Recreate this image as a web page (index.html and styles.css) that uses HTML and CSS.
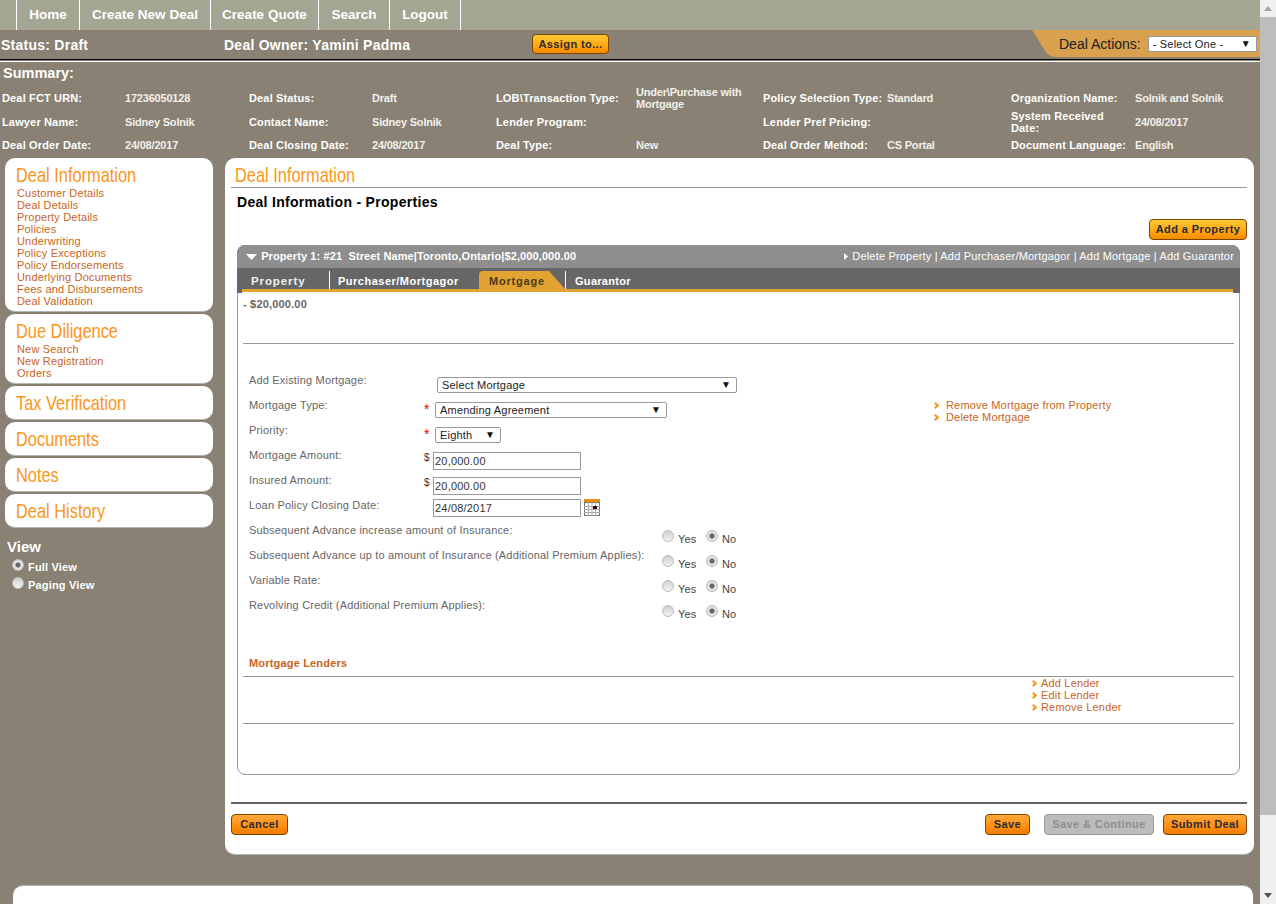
FILE: index.html
```html
<!DOCTYPE html>
<html lang="en">
<head>
  <meta charset="UTF-8">
  <meta name="viewport" content="width=device-width, initial-scale=1.0">
  <title>Deal Information</title>
  <link rel="stylesheet" href="styles.css">
</head>
<body>
  <div class="page">
    <!-- Top navigation -->
    <nav class="top-nav">
      <a href="#" class="nav-home">Home</a>
      <a href="#" class="nav-new">Create New Deal</a>
      <a href="#" class="nav-quote">Create Quote</a>
      <a href="#" class="nav-search">Search</a>
      <a href="#" class="nav-logout">Logout</a>
    </nav>

    <!-- Status bar -->
    <div class="status-bar">
      <div class="status-text">Status: Draft</div>
      <div class="owner-text">Deal Owner: Yamini Padma</div>
      <button class="btn btn-assign" type="button">Assign to...</button>
      <div class="deal-actions">
        <label for="dealActions">Deal Actions:</label>
        <span class="select-wrap">
          <select id="dealActions" class="select select-actions"><option>- Select One -</option></select>
        </span>
      </div>
    </div>
    <div class="status-rule"></div>

    <!-- Summary -->
    <section class="summary">
      <h2>Summary:</h2>
      <div class="summary-grid">
        <b>Deal FCT URN:</b><span>17236050128</span>
        <b>Deal Status:</b><span>Draft</span>
        <b>LOB\Transaction Type:</b><span>Under\Purchase with Mortgage</span>
        <b>Policy Selection Type:</b><span>Standard</span>
        <b>Organization Name:</b><span>Solnik and Solnik</span>

        <b>Lawyer Name:</b><span>Sidney Solnik</span>
        <b>Contact Name:</b><span>Sidney Solnik</span>
        <b>Lender Program:</b><span></span>
        <b>Lender Pref Pricing:</b><span></span>
        <b>System Received<br>Date:</b><span>24/08/2017</span>

        <b>Deal Order Date:</b><span>24/08/2017</span>
        <b>Deal Closing Date:</b><span>24/08/2017</span>
        <b>Deal Type:</b><span>New</span>
        <b>Deal Order Method:</b><span>CS Portal</span>
        <b>Document Language:</b><span>English</span>
      </div>
    </section>

    <div class="layout">
      <!-- Left side menu -->
      <aside class="sidebar">
        <div class="side-card">
          <h3><span class="narrow">Deal Information</span></h3>
          <a href="#">Customer Details</a>
          <a href="#">Deal Details</a>
          <a href="#">Property Details</a>
          <a href="#">Policies</a>
          <a href="#">Underwriting</a>
          <a href="#">Policy Exceptions</a>
          <a href="#">Policy Endorsements</a>
          <a href="#">Underlying Documents</a>
          <a href="#">Fees and Disbursements</a>
          <a href="#">Deal Validation</a>
        </div>
        <div class="side-card">
          <h3><span class="narrow">Due Diligence</span></h3>
          <a href="#">New Search</a>
          <a href="#">New Registration</a>
          <a href="#">Orders</a>
        </div>
        <div class="side-card"><h3><span class="narrow">Tax Verification</span></h3></div>
        <div class="side-card"><h3><span class="narrow">Documents</span></h3></div>
        <div class="side-card"><h3><span class="narrow">Notes</span></h3></div>
        <div class="side-card"><h3><span class="narrow">Deal History</span></h3></div>

        <div class="view-box">
          <h4>View</h4>
          <label><input type="radio" class="radio" name="view" checked> Full View</label>
          <label><input type="radio" class="radio" name="view"> Paging View</label>
        </div>
      </aside>

      <!-- Main content -->
      <main class="main-card">
        <h3 class="main-title"><span class="narrow">Deal Information</span></h3>
        <h1 class="page-title">Deal Information - Properties</h1>
        <div class="add-row"><button class="btn btn-add" type="button">Add a Property</button></div>

        <div class="property">
          <div class="property-head">
            <div class="property-name">
              <svg class="tri-down" width="11" height="6" viewBox="0 0 11 6"><path d="M0 0H11L5.500 6Z" fill="#fff"/></svg>
              Property 1: #21&nbsp; Street Name|Toronto,Ontario|$2,000,000.00
            </div>
            <div class="property-links">
              <svg class="tri-right" width="4" height="7" viewBox="0 0 4 7"><path d="M0 0L4 3.500L0 7Z" fill="#fff"/></svg>
              Delete Property | Add Purchaser/Mortgagor | Add Mortgage | Add Guarantor
            </div>
          </div>
          <div class="tabs">
            <a href="#" class="tab tab-property">Property</a>
            <a href="#" class="tab tab-purchaser">Purchaser/Mortgagor</a>
            <a href="#" class="tab tab-active">Mortgage</a>
            <a href="#" class="tab tab-guarantor">Guarantor</a>
          </div>

          <div class="property-body">
            <div class="mortgage-name">- $20,000.00</div>
            <hr class="rule rule-top">

            <div class="form-area">
              <div class="form-fields">
                <div class="form-row">
                  <label>Add Existing Mortgage:</label>
                  <span class="select-wrap select-existing">
                    <select class="select"><option>Select Mortgage</option></select>
                  </span>
                </div>
                <div class="form-row">
                  <label>Mortgage Type:</label>
                  <i class="req">*</i>
                  <span class="select-wrap select-type">
                    <select class="select"><option>Amending Agreement</option></select>
                  </span>
                </div>
                <div class="form-row">
                  <label>Priority:</label>
                  <i class="req">*</i>
                  <span class="select-wrap select-priority">
                    <select class="select"><option>Eighth</option></select>
                  </span>
                </div>
                <div class="form-row">
                  <label>Mortgage Amount:</label>
                  <i class="dollar">$</i>
                  <input class="text-input" type="text" value="20,000.00">
                </div>
                <div class="form-row">
                  <label>Insured Amount:</label>
                  <i class="dollar">$</i>
                  <input class="text-input" type="text" value="20,000.00">
                </div>
                <div class="form-row">
                  <label>Loan Policy Closing Date:</label>
                  <i class="dollar"></i>
                  <input class="text-input text-input-date" type="text" value="24/08/2017">
                  <svg class="calendar" width="16" height="17" viewBox="0 0 16 17">
                    <rect x="0" y="0" width="16" height="3" fill="#e8900c"/>
                    <rect x="0.500" y="3.500" width="15" height="13" fill="#fff" stroke="#777"/>
                    <path d="M0 7.500H16M0 10.500H16M0 13.500H16M4.500 3V17M8 3V17M11.500 3V17" stroke="#aaa" fill="none"/>
                    <rect x="9" y="7" width="4" height="3" fill="#300"/>
                  </svg>
                </div>
                <div class="form-row">
                  <label class="label-wide">Subsequent Advance increase amount of Insurance:</label>
                  <span class="yes-no">
                    <input type="radio" class="radio" name="r1"><em>Yes</em>
                    <input type="radio" class="radio" name="r1" checked><em>No</em>
                  </span>
                </div>
                <div class="form-row">
                  <label class="label-wide">Subsequent Advance up to amount of Insurance (Additional Premium Applies):</label>
                  <span class="yes-no">
                    <input type="radio" class="radio" name="r2"><em>Yes</em>
                    <input type="radio" class="radio" name="r2" checked><em>No</em>
                  </span>
                </div>
                <div class="form-row">
                  <label class="label-wide">Variable Rate:</label>
                  <span class="yes-no">
                    <input type="radio" class="radio" name="r3"><em>Yes</em>
                    <input type="radio" class="radio" name="r3" checked><em>No</em>
                  </span>
                </div>
                <div class="form-row">
                  <label class="label-wide">Revolving Credit (Additional Premium Applies):</label>
                  <span class="yes-no">
                    <input type="radio" class="radio" name="r4"><em>Yes</em>
                    <input type="radio" class="radio" name="r4" checked><em>No</em>
                  </span>
                </div>
              </div>
              <div class="form-links">
                <a href="#" class="chev-link">Remove Mortgage from Property</a>
                <a href="#" class="chev-link">Delete Mortgage</a>
              </div>
            </div>

            <h5 class="lenders-title">Mortgage Lenders</h5>
            <hr class="rule">
            <div class="lender-links">
              <a href="#" class="chev-link">Add Lender</a>
              <a href="#" class="chev-link">Edit Lender</a>
              <a href="#" class="chev-link">Remove Lender</a>
            </div>
            <hr class="rule">
          </div>
        </div>

        <div class="footer-buttons">
          <button class="btn btn-cancel" type="button">Cancel</button>
          <button class="btn btn-save" type="button">Save</button>
          <button class="btn btn-disabled" type="button">Save &amp; Continue</button>
          <button class="btn btn-submit" type="button">Submit Deal</button>
        </div>
      </main>
    </div>

    <div class="bottom-card"></div>
  </div>

  <!-- Window scrollbar -->
  <div class="scrollbar">
    <svg class="arrow-up" width="8" height="5" viewBox="0 0 8 5"><path d="M4 0L8 5H0Z" fill="#a3a3a3"/></svg>
    <div class="scroll-thumb"></div>
    <svg class="arrow-down" width="8" height="5" viewBox="0 0 8 5"><path d="M0 0H8L4 5Z" fill="#505050"/></svg>
  </div>
</body>
</html>
```

FILE: styles.css
```css
/* General Styles */
html, body {
  margin: 0;
  padding: 0;
  height: 904px;
  overflow: hidden;
}

body {
  display: flex;
  font-family: "Liberation Sans", Arial, sans-serif;
  font-size: 11px;
  letter-spacing: 0.18px;
  color: #666;
  background-color: #898173;
}

a {
  text-decoration: none;
}

.page {
  width: 1260px;
  height: 904px;
  overflow: hidden;
  flex: none;
}

/* Top Nav */
.top-nav {
  display: flex;
  height: 30px;
  padding-left: 16px;
  background-color: #a3a692;
}

.top-nav a {
  box-sizing: border-box;
  border-left: 1px solid #fff;
  color: #fff;
  font-size: 13.500px;
  font-weight: bold;
  letter-spacing: 0;
  line-height: 29px;
  text-align: center;
}

.nav-home { width: 63px; }
.nav-new { width: 131px; }
.nav-quote { width: 108px; }
.nav-search { width: 71px; }
.top-nav .nav-logout { width: 72px; border-right: 1px solid #fff; }

/* Status Bar */
.status-bar {
  display: flex;
  align-items: center;
  height: 29px;
  border-bottom: 1px solid #000;
  color: #fff;
  font-size: 14px;
  font-weight: bold;
  letter-spacing: 0.25px;
}

.status-text {
  width: 224px;
  padding-left: 1px;
  box-sizing: border-box;
}

.owner-text {
  width: 308px;
}

.status-rule {
  height: 1px;
  margin-top: 1px;
  background-color: #fff;
}

.deal-actions {
  display: flex;
  align-items: center;
  gap: 7px;
  box-sizing: border-box;
  width: 228px;
  height: 27px;
  margin-left: auto;
  margin-top: -2px;
  padding-left: 27px;
  color: #222;
  font-weight: normal;
  letter-spacing: 0;
  background-color: #d9a04d;
  clip-path: path('M0 0H228V27H24Q16 27 12 19Z');
}

.deal-actions label {
  font-size: 14px;
}

.deal-actions .select-wrap {
  width: 109px;
  margin-top: 0;
}

/* Buttons */
.btn {
  height: 21px;
  padding: 0 0 2px;
  border: 1px solid #7a4500;
  border-radius: 4px;
  background: linear-gradient(#ffa83a, #ff8f10 60%, #ef7a00);
  color: #2b2b3a;
  font-family: inherit;
  font-size: 11px;
  font-weight: bold;
  letter-spacing: 0.4px;
}

.btn-add,
.btn-assign {
  background: linear-gradient(#ffc832, #ffa60e 60%, #f88a00);
}

.btn-add {
  width: 98px;
}

.btn-assign {
  width: 77px;
  height: 20px;
  padding: 0;
  margin-top: -1px;
}

.btn-cancel {
  width: 57px;
}

.btn-save {
  width: 45px;
  margin-left: auto;
}

.btn-disabled {
  width: 110px;
  margin-left: 14px;
  border-color: #999;
  background: #bcbcbc;
  color: #8e8e8e;
}

.btn-submit {
  width: 84px;
  margin-left: 9px;
}

/* Summary */
.summary {
  height: 96px;
  color: #fff;
}

.summary h2 {
  margin: 0;
  padding: 3px 0 0 3px;
  font-size: 14.500px;
  letter-spacing: 0;
  line-height: 17px;
}

.summary-grid {
  display: grid;
  grid-template-columns: 123px 124px 123px 124px 140px 127px 124px 124px 124px 1fr;
  grid-template-rows: 24px 23px 24px;
  align-items: center;
  margin-top: 4px;
  padding-left: 2px;
  font-size: 11px;
  line-height: 12px;
  font-weight: bold;
}

.summary-grid span {
  color: #f2f0ea;
  letter-spacing: -0.2px;
}

.summary-grid b {
  letter-spacing: 0.15px;
  white-space: nowrap;
}

/* Layout */
.layout {
  display: flex;
  align-items: flex-start;
  padding-left: 5px;
}

.sidebar {
  width: 208px;
  flex: none;
}

.side-card {
  box-sizing: border-box;
  min-height: 34px;
  margin-bottom: 2px;
  padding: 5px 0 4px 11px;
  border-bottom: 1px solid #b4b4b4;
  border-radius: 10px;
  background-color: #fff;
}

.side-card h3,
.main-title {
  margin: 0;
  color: #fa9619;
  font-size: 21px;
  font-weight: normal;
  letter-spacing: 0;
  line-height: 24px;
}

/* no condensed family is installed, so the heading is squeezed */
.narrow {
  display: inline-block;
  transform: scaleX(0.78);
  transform-origin: left center;
  white-space: nowrap;
}

.side-card a {
  display: block;
  padding-left: 1px;
  color: #c9651b;
  font-size: 11px;
  line-height: 12px;
}

.view-box {
  padding: 9px 0 0 2px;
  color: #fff;
  font-weight: bold;
}

.view-box h4 {
  margin: 0 0 3px;
  font-size: 15px;
  letter-spacing: 0;
  line-height: 16px;
}

.view-box label {
  display: flex;
  align-items: center;
  gap: 4px;
  height: 18px;
  padding-left: 5px;
}

.view-box .radio {
  margin-top: -4px;
}

/* Radios */
.radio {
  appearance: none;
  width: 12px;
  height: 12px;
  margin: 0;
  border: 1px solid #bdbdbd;
  border-radius: 50%;
  background: linear-gradient(#cfcfcf, #f4f4f4);
  flex: none;
}

.radio:checked {
  background: radial-gradient(circle, #666 0 2px, #e0e0e0 3px);
}

/* Main Card */
.main-card {
  box-sizing: border-box;
  width: 1029px;
  height: 697px;
  margin-left: 12px;
  padding: 5px 7px 0 6px;
  border-bottom: 1px solid #b4b4b4;
  border-radius: 10px;
  background-color: #fff;
}

.main-title {
  padding-left: 4px;
  border-bottom: 1px solid #999;
}

.page-title {
  margin: 6px 0 0 6px;
  color: #000;
  font-size: 14px;
  letter-spacing: 0.3px;
  line-height: 16px;
}

.add-row {
  display: flex;
  justify-content: flex-end;
  margin-top: 9px;
}

/* Property Panel */
.property {
  box-sizing: border-box;
  height: 530px;
  margin: 5px 7px 0 6px;
  border: 1px solid #999;
  border-radius: 8px;
}

.property-head {
  display: flex;
  justify-content: space-between;
  height: 23px;
  margin: -1px -1px 0;
  padding: 0 6px 0 9px;
  border-radius: 8px 8px 0 0;
  background-color: #8e8e8e;
  color: #fff;
  line-height: 23px;
}

.property-name {
  font-weight: bold;
  letter-spacing: 0.1px;
}

.tri-down {
  margin-right: 1px;
}

.tri-right {
  margin-right: 1px;
}

.tabs {
  display: flex;
  box-sizing: border-box;
  height: 25px;
  margin: 0 -1px;
  padding-top: 3px;
  background: linear-gradient(#666 0 21px, #e2a333 21px 24px, #fff 24px);
  background-size: 991px 100%;
  background-position: 5px 0;
  background-repeat: no-repeat;
  background-color: #666;
  font-weight: bold;
  letter-spacing: 0.5px;
}

.tab {
  box-sizing: border-box;
  height: 18px;
  color: #fff;
  line-height: 20px;
}

.tab-property {
  width: 88px;
  margin-left: 5px;
  padding-left: 9px;
  border-right: 1px solid #fff;
  color: #eee;
  font-size: 11.500px;
  letter-spacing: 0.9px;
}

.tab-purchaser {
  width: 149px;
  padding-left: 8px;
}

.tab-active {
  width: 86px;
  padding-left: 10px;
  border-radius: 4px 0 0 0;
  background-color: #e2a333;
  color: #4a3a1a;
  letter-spacing: 0.8px;
  clip-path: polygon(0 0, 70px 0, 86px 18px, 0 18px);
}

.tab-guarantor {
  padding-left: 9px;
  border-left: 1px solid #fff;
  letter-spacing: 0.3px;
}

.property-body {
  padding: 0 5px;
}

.mortgage-name {
  margin-top: 5px;
  font-weight: bold;
  line-height: 12px;
}

.rule {
  height: 1px;
  margin: 0;
  border: 0;
  background-color: #999;
}

.rule-top {
  margin-top: 33px;
}

/* Mortgage Form */
.form-area {
  display: flex;
  margin-top: 25px;
}

.form-fields {
  width: 692px;
  flex: none;
}

.form-row {
  display: flex;
  align-items: flex-start;
  height: 25px;
  padding-left: 6px;
  line-height: 25px;
}

.form-row label {
  width: 175px;
  flex: none;
  margin-top: -1px;
}

.form-row .label-wide {
  width: 413px;
}

.req {
  width: 11px;
  margin-top: 3px;
  color: #e00;
  font-size: 14px;
  font-style: normal;
  line-height: 24px;
}

.dollar {
  width: 9px;
  margin-top: 3px;
  color: #333;
  font-style: normal;
  font-size: 10px;
  line-height: 22px;
}

.select-wrap {
  position: relative;
  display: block;
  margin-top: 8px;
}

.select-wrap::after {
  content: "▼";
  position: absolute;
  top: 0;
  right: 6px;
  color: #111;
  font-size: 10px;
  line-height: 16px;
  pointer-events: none;
}

.select {
  display: block;
  appearance: none;
  box-sizing: border-box;
  width: 100%;
  height: 16px;
  padding: 0 0 0 4px;
  border: 1px solid #999;
  border-radius: 2px;
  background-color: #fff;
  color: #222;
  font-family: inherit;
  font-size: 11px;
  letter-spacing: 0.2px;
  line-height: 14px;
}

.select-existing {
  width: 300px;
  margin-left: 13px;
}

.select-type {
  width: 232px;
}

.select-priority {
  width: 66px;
}

.text-input {
  box-sizing: border-box;
  width: 148px;
  height: 18px;
  margin: 8px 0 0;
  padding: 0 1px;
  border: 1px solid #999;
  color: #333;
  font-family: inherit;
  font-size: 11px;
  letter-spacing: 0.2px;
}

.text-input-date {
  margin-top: 5px;
}

.calendar {
  margin: 5px 0 0 3px;
}

.yes-no {
  display: flex;
  align-items: flex-start;
  line-height: 13px;
  padding-top: 11px;
}

.yes-no em {
  margin: 3px 0 0 4px;
  width: 28px;
  color: #444;
  font-style: normal;
}

.form-links {
  padding: 30px 0 0 0;
}

.chev-link {
  position: relative;
  display: block;
  padding-left: 11px;
  color: #c9651b;
  line-height: 12px;
}

/* small orange chevron in front of a link */
.chev-link::before {
  content: "";
  position: absolute;
  left: -2px;
  top: 4px;
  width: 3px;
  height: 3px;
  border-top: 2px solid #f7941d;
  border-right: 2px solid #f7941d;
  transform: rotate(45deg);
}

.lenders-title {
  margin: 38px 0 0 6px;
  color: #c9651b;
  font-size: 11px;
  line-height: 12px;
}

.lenders-title + .rule {
  margin-top: 7px;
}

.lender-links {
  padding: 0 0 10px 790px;
}

.lender-links .chev-link {
  padding-left: 8px;
}

/* Footer */
.footer-buttons {
  display: flex;
  margin-top: 27px;
  padding-top: 10px;
  border-top: 2px solid #666;
}

.bottom-card {
  width: 1240px;
  height: 40px;
  margin: 30px 0 0 13px;
  border-top: 1px solid #b4b4b4;
  border-radius: 10px;
  background-color: #fff;
}

/* Scrollbar */
.scrollbar {
  position: relative;
  width: 16px;
  height: 904px;
  flex: none;
  background-color: #f0f0f0;
}

.scroll-thumb {
  height: 798px;
  margin-top: 17px;
  background-color: #bdbdbd;
}

.arrow-up {
  position: absolute;
  top: 6px;
  left: 4px;
}

.arrow-down {
  position: absolute;
  bottom: 6px;
  left: 4px;
}
```
